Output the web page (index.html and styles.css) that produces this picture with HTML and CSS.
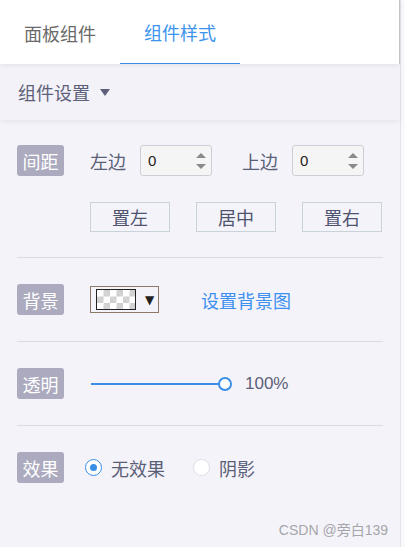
FILE: index.html
```html
<!DOCTYPE html>
<html lang="zh">
<head>
<meta charset="utf-8">
<link rel="stylesheet" href="styles.css">
</head>
<body>
<div class="panel">
  <div class="tabs">
    <div class="tab">面板组件</div>
    <div class="tab active">组件样式</div>
  </div>
  <div class="bar">组件设置 <span class="caret"></span></div>
  <div class="content">
    <div class="section first">
      <div class="row">
        <span class="badge">间距</span>
        <span class="lbl">左边</span>
        <div class="num"><span>0</span><span class="spin"><i class="up"></i><i class="down"></i></span></div>
        <span class="lbl lbl2">上边</span>
        <div class="num"><span>0</span><span class="spin"><i class="up"></i><i class="down"></i></span></div>
      </div>
      <div class="btns">
        <span class="btn">置左</span>
        <span class="btn">居中</span>
        <span class="btn">置右</span>
      </div>
    </div>
    <div class="section">
      <div class="row">
        <span class="badge">背景</span>
        <div class="swatch"><span class="checker"></span><span class="tri">▼</span></div>
        <span class="link">设置背景图</span>
      </div>
    </div>
    <div class="section">
      <div class="row">
        <span class="badge">透明</span>
        <div class="slider"><span class="track"></span><span class="thumb"></span></div>
        <span class="pct">100%</span>
      </div>
    </div>
    <div class="section last">
      <div class="row">
        <span class="badge">效果</span>
        <span class="radio on"></span><span class="rlbl">无效果</span>
        <span class="radio"></span><span class="rlbl">阴影</span>
      </div>
    </div>
  </div>
  <div class="mark">CSDN @旁白139</div>
</div>
</body>
</html>
```
FILE: styles.css
```css
* { box-sizing: border-box; }
html, body { margin: 0; padding: 0; }
body {
  width: 405px;
  height: 547px;
  background: #f9f9fb;
  font-family: "Noto Sans CJK SC", "Noto Sans", sans-serif;
  overflow: hidden;
}
.panel {
  position: relative;
  width: 401px;
  height: 547px;
  background: #f4f3f9;
  border-right: 1px solid #e4e3ea;
}
.tabs {
  position: relative;
  z-index: 2;
  display: flex;
  height: 64px;
  background: #fff;
  border-right: 1px solid #c4c4c8;
  box-shadow: 0 1px 5px rgba(0,0,0,0.08);
}
.tab {
  width: 120px;
  display: flex;
  align-items: center;
  justify-content: center;
  font-size: 18px;
  color: #6a6a6a;
  padding-top: 1px;
}
.tab.active {
  color: #3d94ee;
  border-bottom: 1px solid #3d8de6;
}
.bar {
  position: relative;
  z-index: 1;
  height: 56px;
  display: flex;
  align-items: center;
  padding-left: 18px;
  font-size: 18px;
  color: #5d6079;
  background: #f3f2f8;
  box-shadow: 0 2px 5px rgba(0,0,0,0.06);
}
.caret {
  display: inline-block;
  margin-left: 10px;
  width: 0;
  height: 0;
  border-left: 5px solid transparent;
  border-right: 5px solid transparent;
  border-top: 7px solid #5d6079;
}
.content { padding: 0 17px; }
.section {
  padding: 26px 0 26px;
  border-bottom: 1px solid #dcdbe6;
}
.section.first { padding-top: 25px; padding-bottom: 25px; }
.section.last { border-bottom: none; }
.row {
  display: flex;
  align-items: center;
  height: 31px;
}
.badge {
  width: 47px;
  height: 31px;
  border-radius: 3px;
  background: #abaabe;
  color: #fff;
  font-size: 18px;
  display: flex;
  align-items: center;
  justify-content: center;
  margin-right: 26px;
  flex: none;
}
.lbl {
  font-size: 18px;
  color: #5b5f78;
  margin-right: 14px;
}
.lbl2 { margin-left: 30px; }
.num {
  width: 72px;
  height: 31px;
  background: #f5f5f5;
  border: 1px solid #cbcfd5;
  border-radius: 3px;
  display: flex;
  align-items: center;
  justify-content: space-between;
  padding: 0 5px 0 7px;
  font-family: "Liberation Sans", sans-serif;
  font-size: 15px;
  color: #1e1e1e;
}
.spin {
  display: flex;
  flex-direction: column;
  gap: 6px;
  width: 10px;
}
.spin i {
  display: block;
  width: 0;
  height: 0;
  border-left: 5px solid transparent;
  border-right: 5px solid transparent;
}
.spin .up { border-bottom: 5px solid #8a8a8a; }
.spin .down { border-top: 5px solid #8a8a8a; }
.btns {
  display: flex;
  margin-top: 26px;
  padding-left: 73px;
  gap: 26px;
}
.btn {
  width: 80px;
  height: 30px;
  border: 1px solid #c9d1d9;
  display: flex;
  align-items: center;
  justify-content: center;
  font-size: 18px;
  color: #4e5470;
}
.swatch {
  width: 69px;
  height: 27px;
  border: 1px solid #8e7866;
  display: flex;
  align-items: center;
  padding-left: 5px;
}
.checker {
  width: 40px;
  height: 21px;
  border: 1px solid #222;
  background-color: #fff;
  background-image:
    linear-gradient(45deg, #d0d0d0 25%, transparent 25%, transparent 75%, #d0d0d0 75%),
    linear-gradient(45deg, #d0d0d0 25%, transparent 25%, transparent 75%, #d0d0d0 75%);
  background-size: 13px 13px;
  background-position: 0 0, 6.5px 6.5px;
}
.tri {
  font-family: "DejaVu Sans", sans-serif;
  font-size: 12px;
  color: #222;
  margin-left: 9px;
}
.link {
  margin-left: 42px;
  font-size: 18px;
  color: #3d8ff0;
}
.slider {
  position: relative;
  width: 141px;
  height: 16px;
  margin-left: 1px;
}
.track {
  position: absolute;
  left: 0;
  right: 8px;
  top: 7px;
  height: 2px;
  background: #3a8ee6;
}
.thumb {
  position: absolute;
  right: 0;
  top: 1px;
  width: 14px;
  height: 14px;
  border: 2px solid #3a8ee6;
  border-radius: 50%;
  background: #fff;
}
.pct {
  margin-left: 13px;
  font-family: "Liberation Sans", sans-serif;
  font-size: 17px;
  color: #5b5f78;
}
.radio {
  width: 17px;
  height: 17px;
  border-radius: 50%;
  border: 1px solid #dcdfe6;
  background: #fff;
  margin-left: -5px;
  margin-right: 9px;
  position: relative;
  flex: none;
}
.radio.on {
  border-color: #3a8ee6;
}
.radio.on::after {
  content: "";
  position: absolute;
  left: 4px;
  top: 4px;
  width: 7px;
  height: 7px;
  border-radius: 50%;
  background: #3a8ee6;
}
.rlbl {
  font-size: 18px;
  color: #5b5f78;
  margin-right: 28px;
}
.rlbl + .radio { margin-left: 0; }
.mark {
  position: absolute;
  right: 12px;
  bottom: 8px;
  font-family: "Liberation Sans", "Noto Sans CJK SC", sans-serif;
  font-size: 14px;
  color: #a6a6aa;
}
```
